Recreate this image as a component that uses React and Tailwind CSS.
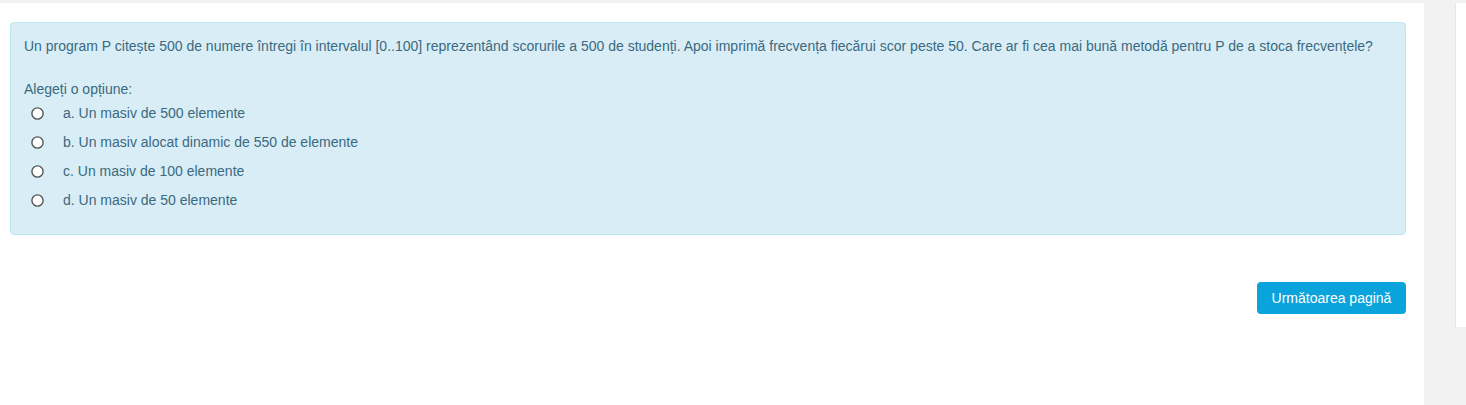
// App.jsx — pagina de intrebare (quiz)

const optiuni = [
  { id: 'a', text: 'a. Un masiv de 500 elemente' },
  { id: 'b', text: 'b. Un masiv alocat dinamic de 550 de elemente' },
  { id: 'c', text: 'c. Un masiv de 100 elemente' },
  { id: 'd', text: 'd. Un masiv de 50 elemente' },
]

function Radio() {
  return (
    <svg width="13" height="13" viewBox="0 0 13 13" className="shrink-0">
      <circle cx="6.5" cy="6.5" r="5.6" fill="#ffffff" stroke="#555555" strokeWidth="1.4" />
    </svg>
  )
}

export default function App() {
  return (
    <div
      className="flex w-full h-[405px] bg-[#f2f2f2] text-[14px] text-[#3a6a80]"
      style={{ fontFamily: '"Liberation Sans", Arial, sans-serif' }}
    >
      {/* --- Coloana principala --- */}
      <div className="w-[1424px] shrink-0 mt-[3px] bg-white px-[10px] pt-[19px]">
        <div className="w-[1396px] rounded-[4px] border border-[#bce8f1] bg-[#d9edf7] px-[13px] pt-[13px] pb-[19px]">
          <p className="leading-[20px]">
            Un program P citește 500 de numere întregi în intervalul [0..100] reprezentând scorurile a 500 de studenți. Apoi imprimă frecvența fiecărui scor peste 50. Care ar fi cea mai bună metodă pentru P de a stoca frecvențele?
          </p>
          <p className="mt-[23px] leading-[20px]">Alegeți o opțiune:</p>
          <div className="flex flex-col">
            {optiuni.map((opt) => (
              <label key={opt.id} className="flex h-[29px] items-center pl-[7px]">
                <Radio />
                <span className="ml-[19px]">{opt.text}</span>
              </label>
            ))}
          </div>
        </div>

        <div className="mt-[47px] flex w-[1396px] justify-end">
          <button
            type="button"
            className="h-[32px] w-[149px] rounded-[4px] bg-[#0aa3dc] text-[14px] text-white"
          >
            Următoarea pagină
          </button>
        </div>
      </div>

      {/* --- Bloc lateral --- */}
      <div className="ml-[31px] mt-[3px] h-[324px] flex-1 border-l border-[#e6e6e6] bg-white" />
    </div>
  )
}
